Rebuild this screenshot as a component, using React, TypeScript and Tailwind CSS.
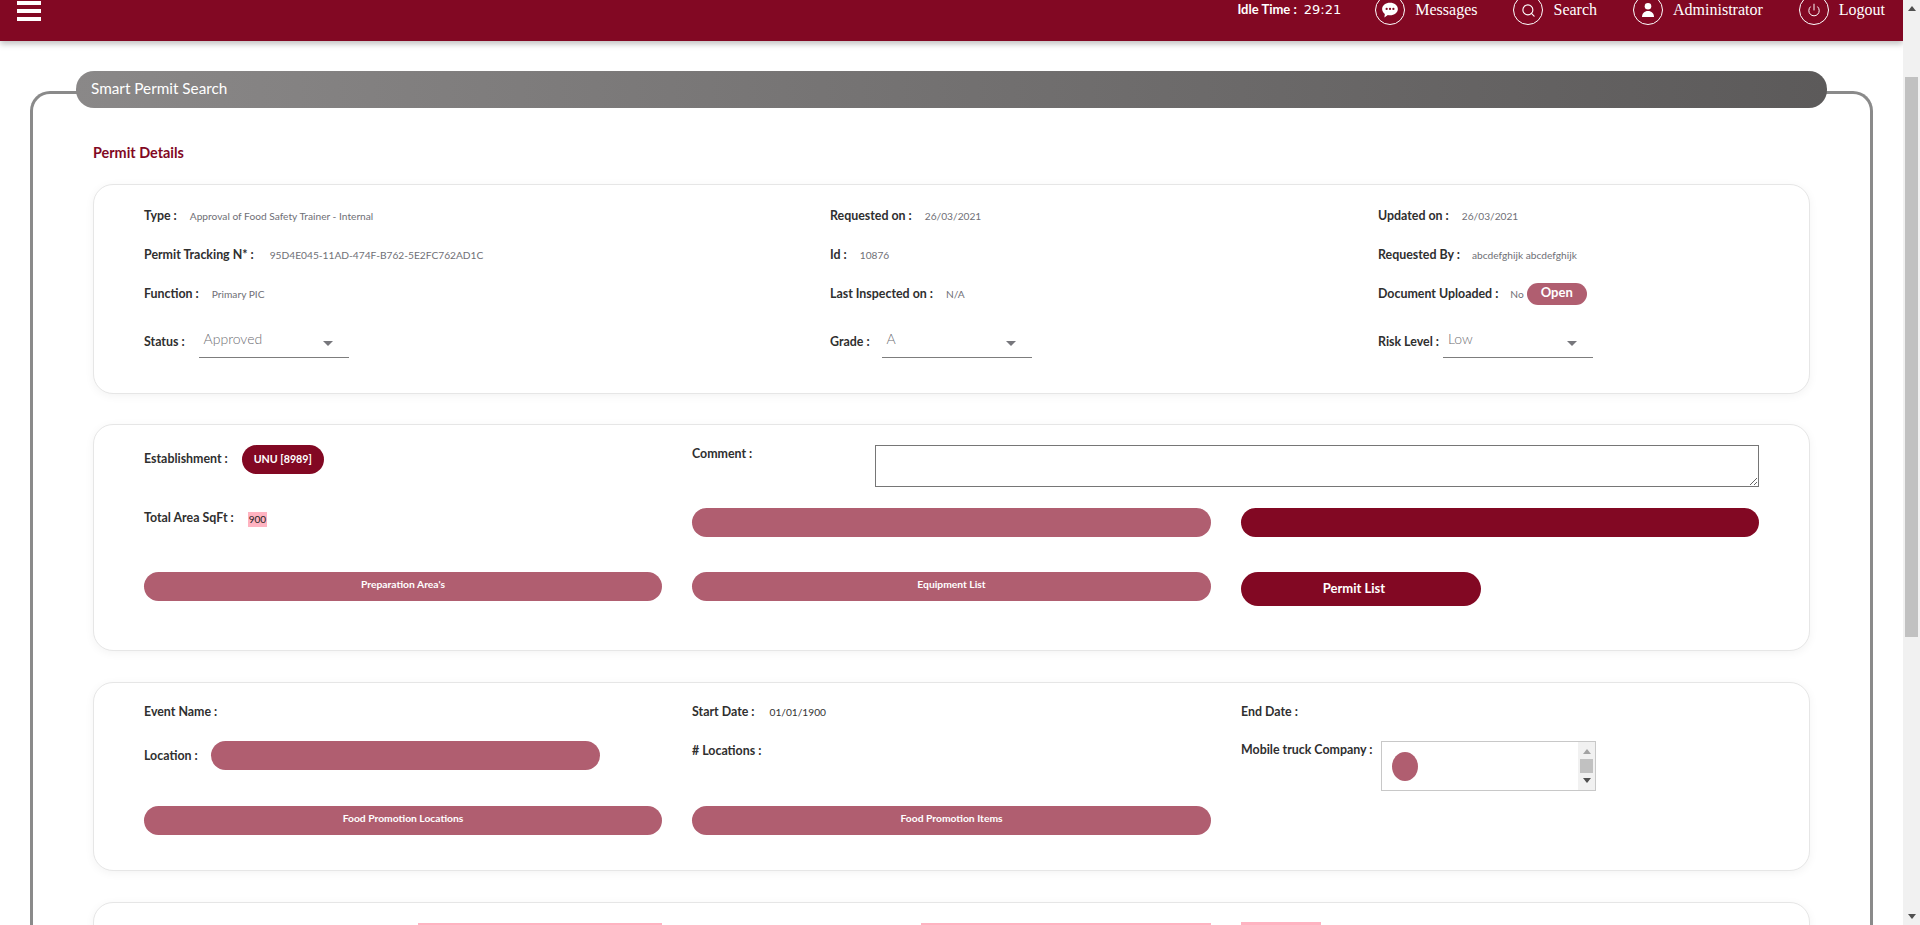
import React from 'react';
import { Search, Power } from 'lucide-react';

const Label = ({ children }: { children: React.ReactNode }) => (
  <span className="block text-[12.4px] leading-[18px] font-bold text-[#2f2f2f] whitespace-nowrap">{children}</span>
);

const Value = ({ children, className = '' }: { children: React.ReactNode; className?: string }) => (
  <span className={`text-[10.2px] leading-[18px] text-[#6f6f76] whitespace-nowrap ${className}`}>{children}</span>
);

const Field = ({ label, value, gap = 'ml-[13px]' }: { label: string; value?: string; gap?: string }) => (
  <div className="flex items-center h-full">
    <Label>{label}</Label>
    {value && <Value className={gap}>{value}</Value>}
  </div>
);

const SelectField = ({ label, value, offset }: { label: string; value: string; offset: string }) => (
  <div className="flex items-center h-full">
    <Label>{label}</Label>
    <div className={`relative w-[150px] h-[34px] border-b border-[#7d7d7d] ${offset} mb-[1px]`}>
      <span className="block pl-[5px] pt-[4px] text-[14px] leading-[22px] font-light text-[#6d6d72]">{value}</span>
      <span className="absolute right-[16px] top-[17px] w-0 h-0 border-x-[5px] border-x-transparent border-t-[5px] border-t-[#77777c]" />
    </div>
  </div>
);

const PillButton = ({ children, dark = false, className = '' }: { children?: React.ReactNode; dark?: boolean; className?: string }) => (
  <button className={`h-[29px] rounded-[14.5px] pb-[3px] text-white text-[10.3px] font-bold flex items-center justify-center ${dark ? 'bg-[#820823]' : 'bg-[#b05e70]'} ${className}`}>
    {children}
  </button>
);

const Card = ({ className, children }: { className: string; children: React.ReactNode }) => (
  <section className={`w-[1717px] bg-white border border-[#e6e6e6] rounded-[20px] shadow-[0_2px_10px_rgba(0,0,0,0.05)] pl-[50px] ${className}`}>
    {children}
  </section>
);

const NavItem = ({ icon, text, className }: { icon: React.ReactNode; text: string; className: string }) => (
  <div className={`flex items-center ${className}`}>
    <span className="w-[30px] h-[30px] rounded-full border border-white flex items-center justify-center">{icon}</span>
    <span className="ml-[10px] text-[16px] text-white font-['Liberation_Serif',serif]">{text}</span>
  </div>
);

const ScrollArrow = ({ up = false }: { up?: boolean }) => (
  <span className={`w-0 h-0 border-x-[4px] border-x-transparent ${up ? 'border-b-[5px] border-b-[#505050]' : 'border-t-[5px] border-t-[#505050]'}`} />
);

export default function App() {
  return (
    <div className="flex h-[925px] overflow-hidden bg-white font-['Lato',sans-serif]">
      <main className="relative w-[1903px] h-full overflow-hidden">
        <header className="relative z-10 h-[41px] bg-[#820823] shadow-[0_3px_6px_rgba(0,0,0,0.25)] flex items-start justify-between">
          <div className="ml-[17px] mt-[1px] flex flex-col gap-[4px]">
            <span className="block w-[24px] h-[4px] bg-white" />
            <span className="block w-[24px] h-[4px] bg-white" />
            <span className="block w-[24px] h-[4px] bg-white" />
          </div>
          <div className="flex items-center -mt-[5px] mr-[18px]">
            <span className="text-[13px] font-bold text-white">Idle Time :</span>
            <span className="ml-[7px] text-[13px] text-white font-['DejaVu_Sans',sans-serif]">29:21</span>
            <NavItem
              className="ml-[34px]"
              text="Messages"
              icon={
                <svg width="18" height="18" viewBox="0 0 16 16">
                  <path d="M8 1.5c3.900 0 7 2.400 7 5.600s-3.100 5.600-7 5.600c-.7 0-1.300-.1-1.900-.2L3 14.600l.4-3.100C2 10.500 1 8.900 1 7.100 1 3.900 4.100 1.500 8 1.500z" fill="#fff" />
                  <circle cx="5" cy="7" r="1" fill="#820823" />
                  <circle cx="8" cy="7" r="1" fill="#820823" />
                  <circle cx="11" cy="7" r="1" fill="#820823" />
                </svg>
              }
            />
            <NavItem className="ml-[36px]" text="Search" icon={<Search size={15} color="#fff" strokeWidth={1.8} />} />
            <NavItem
              className="ml-[36px]"
              text="Administrator"
              icon={
                <svg width="14" height="16" viewBox="0 0 14 16">
                  <circle cx="7" cy="4.300" r="3.300" fill="#fff" />
                  <path d="M1 15c0-3.600 2.400-6 6-6s6 2.400 6 6z" fill="#fff" />
                </svg>
              }
            />
            <NavItem className="ml-[36px]" text="Logout" icon={<Power size={14} color="#fff" strokeWidth={1.7} />} />
          </div>
        </header>

        <div className="ml-[30px] mt-[50px] w-[1843px] h-[900px] border-[3px] border-b-0 border-[#8a8a8a] rounded-t-[20px]">
          <div className="-mt-[23px] ml-[43px] w-[1751px] h-[37px] rounded-[18px] bg-gradient-to-r from-[#8a8888] to-[#5c5a5a] flex items-center pl-[15px] pb-[2px] text-[15.3px] text-white">
            Smart Permit Search
          </div>
          <h2 className="ml-[60px] mt-[36px] text-[14.4px] leading-[18px] font-bold text-[#820823]">Permit Details</h2>

          <div className="ml-[60px] mt-[22px] flex flex-col">
            <Card className="h-[210px] pt-[11px]">
              <div className="grid grid-cols-[686px_548px_1fr] grid-rows-[39px_39px_39px_57px]">
                <Field label="Type :" value="Approval of Food Safety Trainer - Internal" />
                <Field label="Requested on :" value="26/03/2021" />
                <Field label="Updated on :" value="26/03/2021" />
                <Field label="Permit Tracking N* :" value="95D4E045-11AD-474F-B762-5E2FC762AD1C" gap="ml-[16px]" />
                <Field label="Id :" value="10876" />
                <Field label="Requested By :" value="abcdefghijk abcdefghijk" gap="ml-[12px]" />
                <Field label="Function :" value="Primary PIC" />
                <Field label="Last Inspected on :" value="N/A" />
                <div className="flex items-center h-full">
                  <Label>Document Uploaded :</Label>
                  <Value className="ml-[12px]">No</Value>
                  <PillButton className="ml-[3px] w-[60px] !h-[22px] !pb-[1px] !text-[13px]">Open</PillButton>
                </div>
                <SelectField label="Status :" value="Approved" offset="ml-[14px]" />
                <SelectField label="Grade :" value="A" offset="ml-[12px]" />
                <SelectField label="Risk Level :" value="Low" offset="ml-[4px]" />
              </div>
            </Card>

            <Card className="mt-[30px] h-[227px] pt-[20px]">
              <div className="grid grid-cols-[518px_519px_518px] gap-x-[30px] grid-rows-[63px_64px_34px] items-start">
                <div className="flex items-center">
                  <div className="mb-[1px]"><Label>Establishment :</Label></div>
                  <PillButton dark className="ml-[14px] w-[82px] !text-[10.7px] !pb-[1px]">UNU [8989]</PillButton>
                </div>
                <div className="flex items-start">
                  <div className="w-[183px] flex-none"><Label>Comment :</Label></div>
                  <textarea className="flex-none w-[884px] h-[42px] border border-[#767676] bg-white" />
                </div>
                <div />
                <div className="flex items-center mt-[1px]">
                  <Label>Total Area SqFt :</Label>
                  <span className="ml-[14px] mt-[3px] px-[1px] h-[15px] bg-[#ffb3c1] text-[10px] leading-[15px] text-[#222]">900</span>
                </div>
                <PillButton />
                <PillButton dark />
                <PillButton>Preparation Area's</PillButton>
                <PillButton>Equipment List</PillButton>
                <PillButton dark className="!h-[34px] w-[240px] !rounded-[17px] !text-[13px] !pb-[1px] pr-[14px]">Permit List</PillButton>
              </div>
            </Card>

            <Card className="mt-[31px] h-[189px] pt-[20px]">
              <div className="grid grid-cols-[518px_519px_518px] gap-x-[30px] grid-rows-[38px_65px_29px] items-start">
                <Label>Event Name :</Label>
                <div className="flex items-center">
                  <Label>Start Date :</Label>
                  <Value className="ml-[15px] !text-[#333]">01/01/1900</Value>
                </div>
                <Label>End Date :</Label>
                <div className="flex items-center">
                  <Label>Location :</Label>
                  <PillButton className="ml-[13px] w-[389px]" />
                </div>
                <div className="pt-[1px]"><Label># Locations :</Label></div>
                <div className="flex items-start">
                  <Label>Mobile truck Company :</Label>
                  <div className="ml-[9px] w-[215px] h-[50px] border border-[#c8c8c8] flex justify-between">
                    <span className="ml-[10px] mt-[10px] w-[26px] h-[29px] rounded-[50%] bg-[#b05e70]" />
                    <div className="w-[17px] h-full bg-[#f1f1f1] flex flex-col items-center justify-between py-[7px]">
                      <span className="w-0 h-0 border-x-[4px] border-x-transparent border-b-[5px] border-b-[#a3a3a3]" />
                      <span className="w-[13px] h-[14px] bg-[#c1c1c1]" />
                      <ScrollArrow />
                    </div>
                  </div>
                </div>
                <PillButton>Food Promotion Locations</PillButton>
                <PillButton>Food Promotion Items</PillButton>
                <div />
              </div>
            </Card>

            <Card className="mt-[31px] h-[200px] pt-[20px]">
              <div className="grid grid-cols-[518px_519px_518px] gap-x-[30px]">
                <div className="flex justify-end"><span className="w-[244px] h-[18px] bg-[#ffb3c1]" /></div>
                <div className="flex justify-end"><span className="w-[290px] h-[18px] bg-[#ffb3c1]" /></div>
                <div className="-mt-[1px]"><span className="block w-[80px] h-[18px] bg-[#ffb3c1]" /></div>
              </div>
            </Card>
          </div>
        </div>
      </main>

      <aside className="relative w-[17px] h-full bg-[#f1f1f1] flex flex-col items-center">
        <div className="h-[17px] flex items-center justify-center"><ScrollArrow up /></div>
        <div className="mt-[60px] w-[13px] h-[560px] bg-[#c1c1c1]" />
        <div className="mt-auto h-[17px] flex items-center justify-center"><ScrollArrow /></div>
      </aside>
    </div>
  );
}
